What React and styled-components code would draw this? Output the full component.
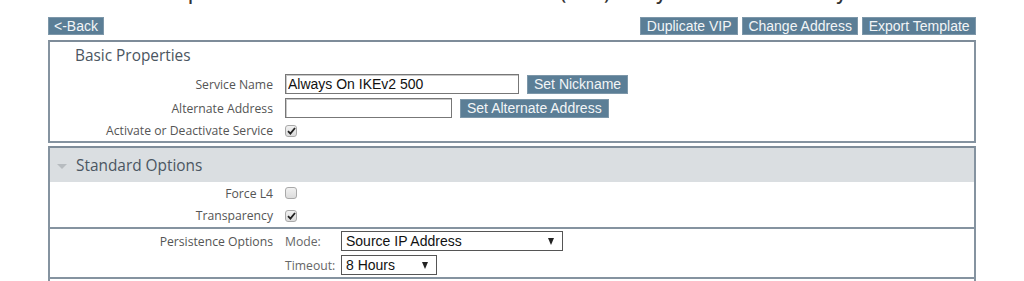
import React from "react";
import styled, { createGlobalStyle } from "styled-components";

const GlobalStyle = createGlobalStyle`
  html, body {
    margin: 0;
    padding: 0;
    background: #fff;
    overflow: hidden;
  }
  body {
    font-family: "Open Sans", "DejaVu Sans", sans-serif;
    color: #555;
  }
`;

const Page = styled.div`
  width: 928px;
  margin-left: 48px;
`;

const Title = styled.h1`
  margin: -19px 0 0 0;
  height: 24px;
  font-size: 18px;
  font-weight: 600;
  line-height: 24px;
  color: #333;
  text-align: center;
  white-space: nowrap;
`;

const TopBar = styled.div`
  display: flex;
  justify-content: space-between;
  align-items: center;
  margin-top: 12px;
  height: 18px;
`;

const ButtonGroup = styled.div`
  display: flex;
  gap: 4px;
`;

const Button = styled.button`
  font-family: "Liberation Sans", Arial, sans-serif;
  font-size: 14px;
  line-height: 16px;
  height: ${(p) => (p.$small ? "19px" : "18px")};
  padding: 0 ${(p) => p.$pad || 6}px;
  margin: 0;
  color: #f2f5f7;
  background: #5b7e96;
  border: 1px solid #7d97a9;
  border-radius: 0;
  cursor: pointer;
`;

const Panel = styled.section`
  margin-top: ${(p) => p.$gap || 5}px;
  border: 2px solid #8593a0;
  border-top-color: #7e8c99;
  background: #fff;
`;

const PanelTitle = styled.h2`
  box-sizing: border-box;
  margin: 0;
  padding: 4px 0 0 25px;
  height: 30px;
  font-size: 15.4px;
  font-weight: 400;
  line-height: 20px;
  color: #4b5661;
`;

const SectionHead = styled.div`
  display: flex;
  align-items: center;
  gap: 9px;
  height: 34px;
  padding-left: 7px;
  background: #dadee1;
  font-size: 15.4px;
  color: #4b5661;
`;

const Caret = styled.span`
  width: 0;
  height: 0;
  margin-top: 2px;
  border-left: 5px solid transparent;
  border-right: 5px solid transparent;
  border-top: 5px solid #b7bcc0;
`;

const Group = styled.div`
  padding: ${(p) => p.$pad || "0"};
  border-top: ${(p) => (p.$divided ? "2px solid #8593a0" : "none")};
`;

const Row = styled.div`
  display: grid;
  grid-template-columns: 223px auto;
  column-gap: 12px;
  align-items: center;
  height: ${(p) => p.$h || 24}px;
`;

const Label = styled.div`
  font-size: 12.2px;
  text-align: right;
  color: #555;
  white-space: nowrap;
`;

const Controls = styled.div`
  display: flex;
  align-items: center;
  gap: ${(p) => p.$gap || 8}px;
`;

const TextInput = styled.input`
  box-sizing: border-box;
  width: ${(p) => p.$w}px;
  height: 20px;
  margin: 0;
  padding: 0 2px;
  font-family: "Liberation Sans", Arial, sans-serif;
  font-size: 14px;
  color: #111;
  border: 1px solid #777;
  box-shadow: inset 1px 1px 0 #c8c8c8;
  outline: none;
`;

const Box = styled.span`
  display: inline-flex;
  align-items: center;
  justify-content: center;
  box-sizing: border-box;
  width: 12px;
  height: 12px;
  border: 1px solid #a9a9a9;
  border-radius: 3px;
  background: linear-gradient(#f1f1f1, #dcdcdc);
`;

const Check = ({ on }) => (
  <Box>
    {on && (
      <svg width="9" height="8" viewBox="0 0 9 8">
        <path d="M1 4.2 L3.4 6.6 L8 1" fill="none" stroke="#222" strokeWidth="1.8" />
      </svg>
    )}
  </Box>
);

const SubLabel = styled.span`
  width: 54px;
  font-size: 12.2px;
  color: #666;
`;

const SelectBox = styled.div`
  box-sizing: border-box;
  display: flex;
  align-items: center;
  justify-content: space-between;
  width: ${(p) => p.$w}px;
  height: 20px;
  padding: 0 8px 0 4px;
  font-family: "Liberation Sans", Arial, sans-serif;
  font-size: 14px;
  color: #111;
  border: 1px solid #555;
  background: #fff;
`;

const Arrow = styled.span`
  width: 0;
  height: 0;
  border-left: 3.5px solid transparent;
  border-right: 3.5px solid transparent;
  border-top: 7px solid #222;
`;

const Select = ({ w, value }) => (
  <SelectBox $w={w}>
    <span>{value}</span>
    <Arrow />
  </SelectBox>
);

export default function App() {
  return (
    <Page>
      <GlobalStyle />
      <Title>Properties for Virtual Service 10.35.48.103:500 (UDP) Always On IKEv2 500 Proxy ... </Title>
      <TopBar>
        <Button $pad={5}>&lt;-Back</Button>
        <ButtonGroup>
          <Button $pad={5.4}>Duplicate VIP</Button>
          <Button $pad={5.4}>Change Address</Button>
          <Button $pad={5.4}>Export Template</Button>
        </ButtonGroup>
      </TopBar>

      <Panel>
        <PanelTitle>Basic Properties</PanelTitle>
        <Group>
          <Row>
            <Label>Service Name</Label>
            <Controls>
              <TextInput $w={234} defaultValue="Always On IKEv2 500" />
              <Button $small>Set Nickname</Button>
            </Controls>
          </Row>
          <Row>
            <Label>Alternate Address</Label>
            <Controls>
              <TextInput $w={167} defaultValue="" />
              <Button $small>Set Alternate Address</Button>
            </Controls>
          </Row>
          <Row $h={21}>
            <Label>Activate or Deactivate Service</Label>
            <Controls>
              <Check on />
            </Controls>
          </Row>
        </Group>
      </Panel>

      <Panel $gap={3}>
        <SectionHead>
          <Caret />
          Standard Options
        </SectionHead>
        <Group>
          <Row $h={22}>
            <Label>Force L4</Label>
            <Controls>
              <Check />
            </Controls>
          </Row>
          <Row $h={23}>
            <Label>Transparency</Label>
            <Controls>
              <Check on />
            </Controls>
          </Row>
        </Group>
        <Group $divided>
          <Row>
            <Label>Persistence Options</Label>
            <Controls $gap={2}>
              <SubLabel>Mode:</SubLabel>
              <Select w={222} value="Source IP Address" />
            </Controls>
          </Row>
          <Row>
            <Label />
            <Controls $gap={2}>
              <SubLabel>Timeout:</SubLabel>
              <Select w={96} value="8 Hours" />
            </Controls>
          </Row>
        </Group>
        <Group $divided $pad="2px 0 0">
          <Row>
            <Label />
            <Controls>
              <TextInput $w={222} defaultValue="" />
            </Controls>
          </Row>
        </Group>
      </Panel>
    </Page>
  );
}
